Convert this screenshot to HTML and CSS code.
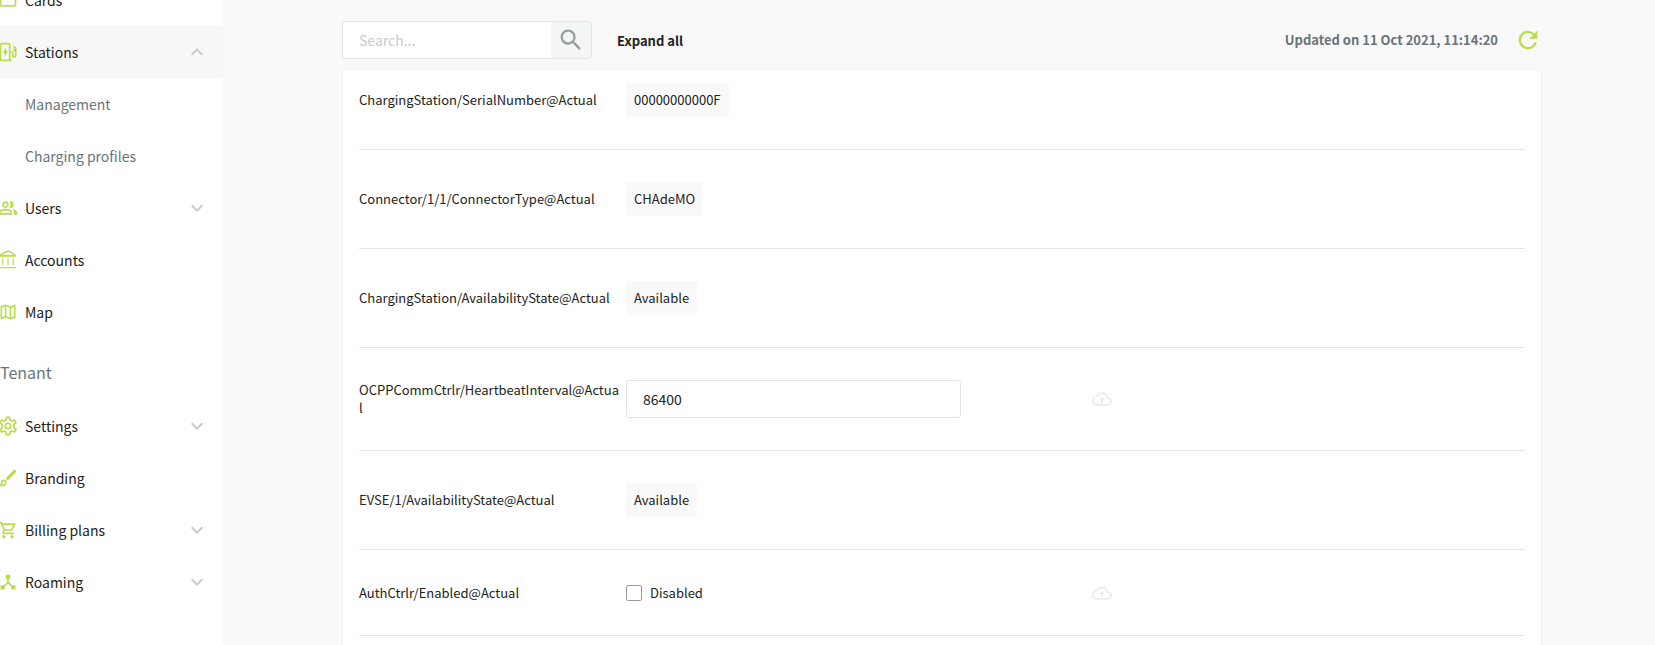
FILE: index.html
```html
<!DOCTYPE html>
<html lang="en">
<head>
<meta charset="utf-8">
<title>Station configuration</title>
<link rel="stylesheet" href="styles.css">
</head>
<body>
<svg class="sprite" aria-hidden="true">
  <symbol id="down" viewBox="0 0 24 24"><path d="M7.41 8.59 12 13.17l4.59-4.58L18 10l-6 6-6-6z"/></symbol>
  <symbol id="up" viewBox="0 0 24 24"><path d="m12 8-6 6 1.41 1.41L12 10.83l4.59 4.58L18 14z"/></symbol>
  <symbol id="cloud" viewBox="0 0 24 24"><path d="M19.35 10.04C18.67 6.59 15.64 4 12 4 9.11 4 6.6 5.64 5.35 8.04 2.34 8.36 0 10.91 0 14c0 3.31 2.69 6 6 6h13c2.76 0 5-2.24 5-5 0-2.64-2.05-4.78-4.65-4.96zM19 18H6c-2.21 0-4-1.79-4-4 0-2.05 1.53-3.76 3.56-3.97l1.07-.11.5-.95C8.08 7.14 9.94 6 12 6c2.62 0 4.88 1.86 5.39 4.43l.3 1.5 1.53.11c1.56.1 2.78 1.41 2.78 2.96 0 1.65-1.35 3-3 3zM8.5 13h2.3v3.500h2.400V13h2.300L12 9.500z"/></symbol>
</svg>
<div class="app">
  <aside class="sidebar">
    <nav class="nav">
      <a class="item" href="#"><svg class="icon" viewBox="0 0 24 24"><path d="M20 4H4c-1.110 0-2 .89-2 2v12c0 1.110.89 2 2 2h16c1.110 0 2-.89 2-2V6c0-1.110-.89-2-2-2zm0 14H4V6h16z"/></svg><span class="text">Cards</span></a>
      <a class="item active" href="#"><svg class="icon" viewBox="0 0 24 24"><path d="M4 1h9c1.100 0 2 .9 2 2v18h1v2H1v-2h1V3c0-1.100.9-2 2-2zm0 2v18h9V3zM9.800 6v5h2L7.800 18v-5h-2z"/><path class="line" d="M15 12h1.500c.8 0 1.300.5 1.300 1.300v3c0 1 .7 1.700 1.700 1.700s1.800-.7 1.800-1.700V8.500c0-1.500-.6-2.500-2.800-3.500M21.300 10.500h-2V8"/></svg><span class="text">Stations</span><svg class="chevron"><use href="#up"/></svg></a>
      <a class="item sub" href="#"><span class="text">Management</span></a>
      <a class="item sub" href="#"><span class="text">Charging profiles</span></a>
      <a class="item" href="#"><svg class="icon" viewBox="0 0 24 24"><path d="M16.670 13.130C18.040 14.060 19 15.320 19 17v3h4v-3c0-2.180-3.570-3.470-6.330-3.870zM15 12c2.210 0 4-1.790 4-4s-1.790-4-4-4c-.47 0-.91.1-1.330.24C14.500 5.270 15 6.580 15 8s-.5 2.730-1.330 3.760c.42.14.86.24 1.330.24zM9 12c2.210 0 4-1.790 4-4s-1.790-4-4-4-4 1.790-4 4 1.790 4 4 4zm0-6c1.100 0 2 .9 2 2s-.9 2-2 2-2-.9-2-2 .9-2 2-2zM9 13c-2.670 0-8 1.340-8 4v3h16v-3c0-2.660-5.330-4-8-4zm6 5H3v-.99C3.200 16.290 6.300 15 9 15s5.800 1.290 6 2z"/></svg><span class="text">Users</span><svg class="chevron"><use href="#down"/></svg></a>
      <a class="item" href="#"><svg class="icon" viewBox="0 0 24 24"><path d="M5 10h1.500v8H5zM11.250 10h1.500v8h-1.500zM17.500 10H19v8h-1.500zM1 20.500h21V22H1zM12 0 1 6v2h21V6zm0 2.200L19 6H5z"/></svg><span class="text">Accounts</span></a>
      <a class="item" href="#"><svg class="icon" viewBox="0 0 24 24"><path d="m20.500 3-.16.03L15 5.100 9 3 3.360 4.900c-.21.07-.36.25-.36.48V20.500c0 .28.22.5.5.5l.16-.03L9 18.900l6 2.100 5.640-1.900c.21-.07.36-.25.36-.48V3.500c0-.28-.22-.5-.5-.5zM10 5.470l4 1.400v11.660l-4-1.400zm-5 .99 3-1.010v11.700l-3 1.160zm14 11.080-3 1.010V6.860l3-1.160z"/></svg><span class="text">Map</span></a>
      <h2 class="heading">Tenant</h2>
      <a class="item" href="#"><svg class="icon" viewBox="0 0 24 24"><path class="line" d="M9.700 4.600 10.200 1.500h3.600l.5 3.100 2.500 1.500 3-1.200 1.800 3.200-2.500 2v3.800l2.500 2-1.800 3.200-3-1.200-2.500 1.500-.5 3.100h-3.600l-.5-3.100-2.500-1.500-3 1.200-1.800-3.200 2.500-2v-3.800l-2.500-2 1.800-3.200 3 1.200z"/><circle class="line" cx="12" cy="12" r="3.300"/></svg><span class="text">Settings</span><svg class="chevron"><use href="#down"/></svg></a>
      <a class="item" href="#"><svg class="icon" viewBox="0 0 24 24"><path d="M9 12.500 19 2.500c.5-.5 1.200-.5 1.700 0l.8.8c.5.5.5 1.200 0 1.700l-10 10z"/><path class="line" d="M6.700 14.800c1.700 0 2.700 1 2.700 2.700 0 2.700-2.600 4.200-6.400 3.400 1.700-.9 1-2.100 1.300-3.700.2-1.400 1.100-2.400 2.400-2.400z"/></svg><span class="text">Branding</span></a>
      <a class="item" href="#"><svg class="icon" viewBox="0 0 24 24"><path d="M15.550 13c.75 0 1.410-.41 1.750-1.030l3.580-6.490A.996.996 0 0 0 20.010 4H5.210l-.94-2H1v2h2l3.600 7.590-1.350 2.440C4.520 15.370 5.480 17 7 17h12v-2H7l1.100-2zM6.160 6h12.150l-2.760 5H8.530zM7 18c-1.100 0-1.990.9-1.990 2S5.900 22 7 22s2-.9 2-2-.9-2-2-2zm10 0c-1.100 0-1.990.9-1.990 2s.89 2 1.990 2 2-.9 2-2-.9-2-2-2z"/></svg><span class="text">Billing plans</span><svg class="chevron"><use href="#down"/></svg></a>
      <a class="item" href="#"><svg class="icon" viewBox="0 0 24 24"><path d="m17 16-4-4V8.820C14.160 8.400 15 7.300 15 6c0-1.660-1.340-3-3-3S9 4.340 9 6c0 1.300.84 2.400 2 2.820V12l-4 4H3v5h5v-3.050l4-4.200 4 4.200V21h5v-5z"/></svg><span class="text">Roaming</span><svg class="chevron"><use href="#down"/></svg></a>
    </nav>
  </aside>
  <main class="main">
    <header class="toolbar">
      <form class="search" role="search">
        <input class="search-input" type="search" placeholder="Search..." aria-label="Search">
        <button class="search-button" type="button" aria-label="Search"><svg viewBox="0 0 24 24"><path d="M15.500 14h-.79l-.28-.27A6.471 6.471 0 0 0 16 9.500 6.500 6.500 0 1 0 9.500 16c1.610 0 3.090-.59 4.230-1.570l.27.28v.79l5 4.990L20.490 19zm-6 0C7.010 14 5 11.990 5 9.500S7.010 5 9.500 5 14 7.010 14 9.500 11.990 14 9.500 14z"/></svg></button>
      </form>
      <button class="expand" type="button">Expand all</button>
      <p class="updated">Updated on 11 Oct 2021, 11:14:20</p>
      <button class="refresh" type="button" aria-label="Refresh"><svg viewBox="0 0 24 24"><path d="M17.650 6.350A7.958 7.958 0 0 0 12 4a8 8 0 1 0 7.730 10h-2.080A5.990 5.990 0 0 1 12 18a6 6 0 1 1 0-12c1.660 0 3.140.69 4.220 1.780L13 11h7V4z"/></svg></button>
    </header>
    <section class="card">
      <div class="row"><span class="name">ChargingStation/SerialNumber@Actual</span><div class="value"><output class="pill">00000000000F</output></div></div>
      <div class="row"><span class="name">Connector/1/1/ConnectorType@Actual</span><div class="value"><output class="pill">CHAdeMO</output></div></div>
      <div class="row"><span class="name">ChargingStation/AvailabilityState@Actual</span><div class="value"><output class="pill">Available</output></div></div>
      <div class="row"><label class="name" for="heartbeat">OCPPCommCtrlr/HeartbeatInterval@Actual</label><div class="value"><input class="field" id="heartbeat" type="text" value="86400"></div><button class="upload" type="button" aria-label="Upload" disabled><svg><use href="#cloud"/></svg></button></div>
      <div class="row"><span class="name">EVSE/1/AvailabilityState@Actual</span><div class="value"><output class="pill">Available</output></div></div>
      <div class="row"><span class="name">AuthCtrlr/Enabled@Actual</span><div class="value"><label class="check"><input class="box" type="checkbox">Disabled</label></div><button class="upload" type="button" aria-label="Upload" disabled><svg><use href="#cloud"/></svg></button></div>
    </section>
  </main>
</div>
</body>
</html>
```
FILE: styles.css
```css
* { box-sizing: border-box; }
body, button, input {
  font-family: "Noto Sans CJK SC", "Open Sans", sans-serif;
}
body {
  margin: 0;
  background: #f9f9f9;
  color: #222;
  font-size: 13px;
  line-height: 18px;
}
button {
  padding: 0;
  border: 0;
  background: none;
  color: inherit;
  cursor: pointer;
}
svg { display: block; fill: currentColor; }
.sprite { display: none; }
.line { fill: none; stroke: currentColor; stroke-width: 2; stroke-linejoin: round; }

.app { display: flex; height: 100vh; overflow: hidden; }
.sidebar {
  flex: 0 0 222px;
  overflow: hidden;
  background: #fff;
}
.nav { margin: -26px 0 0 -2px; }
.item {
  display: flex;
  align-items: center;
  gap: 7px;
  height: 52px;
  padding-right: 13px;
  color: #222;
  font-size: 14px;
  text-decoration: none;
}
.active { background: #f8f8f8; }
.sub { padding-left: 27px; color: #69747a; }
.text { flex: 1; }
.icon { width: 20px; height: 20px; color: #b9dc4c; }
.chevron { width: 24px; height: 24px; color: #c8cacb; }
.heading {
  margin: 0;
  padding: 21px 0 14px 2px;
  color: #69747a;
  font-size: 16px;
  font-weight: 400;
  line-height: 27px;
}

.main { flex: 1; min-width: 0; padding: 21px 113px 0 120px; }
.toolbar { display: flex; align-items: center; margin-bottom: 12px; }
.search {
  display: flex;
  width: 250px;
  height: 38px;
  border: 1px solid #e3e6e6;
  border-radius: 3px;
  background: #fff;
  overflow: hidden;
}
.search-input {
  flex: 1;
  min-width: 0;
  padding: 0 16px;
  border: 0;
  background: none;
  color: #222;
  font-size: 14px;
}
.search-input::placeholder { color: #c8cccd; }
.search-button {
  display: grid;
  place-items: center;
  width: 40px;
  background: #f4f6f6;
  color: #969da1;
}
.search-button svg { width: 28px; height: 28px; }
.expand { margin-left: 25px; font-size: 13px; font-weight: 700; }
.updated { margin: 0 16px 0 auto; color: #69747a; font-weight: 700; }
.refresh { color: #b9dc4c; }
.refresh svg { width: 28px; height: 28px; }

.card {
  height: 100vh;
  padding: 0 16px;
  border: solid #efefef;
  border-width: 0 1px;
  background: #fff;
}
.row {
  display: grid;
  grid-template-columns: 261fr 460fr 433fr;
  column-gap: 6px;
  align-items: center;
  padding: 32px 0;
  border-bottom: 1px solid #e3e6e6;
}
.row:first-child { padding-top: 12px; }
.name { overflow-wrap: anywhere; }
.value { display: flex; }
.pill { padding: 8px; background: #f9f9f9; }
.field {
  width: 100%;
  max-width: 335px;
  height: 38px;
  padding: 0 16px;
  border: 1px solid #e3e6e6;
  border-radius: 3px;
  background: #fff;
  color: #222;
  font-size: 14px;
}
.check { display: flex; align-items: center; gap: 8px; min-height: 21px; }
.box {
  appearance: none;
  width: 16px;
  height: 16px;
  margin: 0;
  border: 1px solid #969da1;
  border-radius: 2px;
  background: #fff;
}
.upload { width: 20px; color: #ebebeb; }
.upload svg { width: 20px; height: 20px; }
```
